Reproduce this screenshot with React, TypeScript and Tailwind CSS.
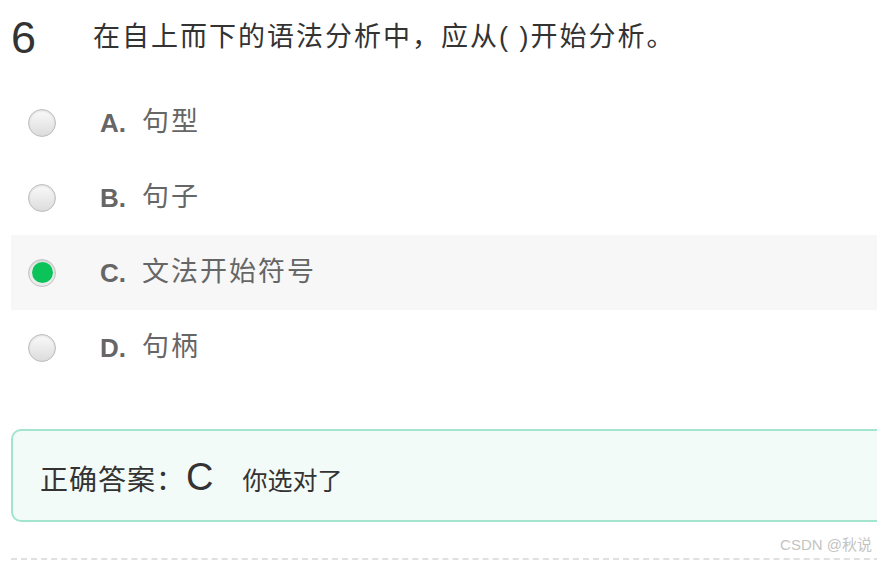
const options = [
  { key: 'A', text: '句型' },
  { key: 'B', text: '句子' },
  { key: 'C', text: '文法开始符号' },
  { key: 'D', text: '句柄' },
];

const selected = 'C';

function Radio({ checked }: { checked: boolean }) {
  if (checked) {
    return (
      <span className="flex h-[28px] w-[28px] items-center justify-center rounded-full border border-[#c4c4c4] bg-[#ececec] shadow-[inset_0_1px_2px_rgba(0,0,0,0.15)]">
        <span className="h-[21px] w-[21px] rounded-full bg-[#0cc35a]" />
      </span>
    );
  }
  return (
    <span className="block h-[28px] w-[28px] rounded-full border border-[#bdbdbd] bg-gradient-to-b from-[#fafafa] to-[#dcdcdc] shadow-[inset_0_1px_2px_rgba(0,0,0,0.12)]" />
  );
}

export default function App() {
  return (
    <div
      className="relative h-[561px] w-[877px] overflow-hidden bg-white"
      style={{ fontFamily: '"Liberation Sans", Arial, "Noto Sans CJK SC", sans-serif' }}
    >
      <div className="w-[900px] pl-[11px]">
        {/* 题目 */}
        <header className="flex h-[74px] items-center">
          <span className="w-[82px] text-[45px] leading-none text-[#333]">6</span>
          <p className="text-[27px] leading-none tracking-[2px] text-[#333]">在自上而下的语法分析中，应从( )开始分析。</p>
        </header>

        {/* 选项 */}
        <ul className="mt-[11px]">
          {options.map((opt) => (
            <li
              key={opt.key}
              className={`flex h-[75px] items-center pl-[17px] ${opt.key === selected ? 'bg-[#f7f7f7]' : ''}`}
            >
              <Radio checked={opt.key === selected} />
              <span className="ml-[44px] text-[26px] font-bold leading-none text-[#666]">{opt.key}.</span>
              <span className="ml-[16px] text-[27px] leading-none tracking-[2px] text-[#666]">{opt.text}</span>
            </li>
          ))}
        </ul>

        {/* 答案 */}
        <div className="mt-[44px] flex h-[93px] items-center rounded-[10px] border-2 border-[#a3e4cc] bg-[#f3fbf8] pl-[27px] pt-[8px]">
          <div className="flex items-baseline text-[#333]">
            <span className="text-[28px] tracking-[1px]">正确答案：</span>
            <span className="ml-[1px] text-[38px] leading-none">C</span>
            <span className="ml-[29px] text-[25px]">你选对了</span>
          </div>
        </div>

        <div className="mt-[36px] border-t-2 border-dashed border-[#e0e0e0]" />
      </div>

      <span className="absolute bottom-[5px] right-[5px] text-[15px] text-[#c4c4c4]">CSDN @秋说</span>
    </div>
  );
}
